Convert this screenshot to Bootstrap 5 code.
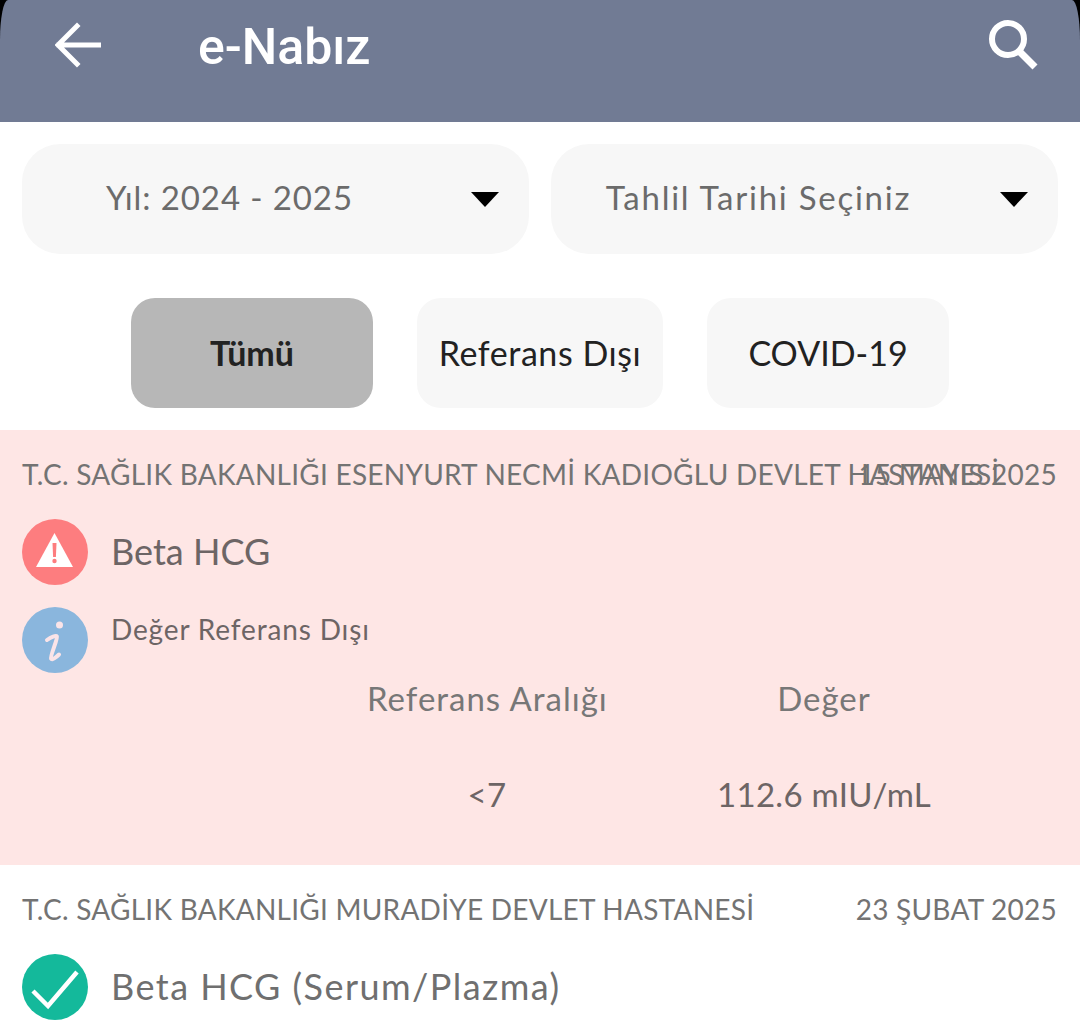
<!DOCTYPE html>
<html lang="tr">
<head>
  <meta charset="UTF-8">
  <title>e-Nabız</title>
  <link href="https://cdn.jsdelivr.net/npm/bootstrap@5.3.2/dist/css/bootstrap.min.css" rel="stylesheet">
  <style>
    html, body { height: 100%; }
    body { background: #fff; font-family: "Lato", "Noto Sans", sans-serif; color: #6f6f6f; overflow: hidden; }
    .screen-top { background: #000; }
    .app-bar { height: 122px; background: #717b94; border-radius: 8px 8px 0 0 / 40px 40px 0 0; padding: 0 42px 32px 55px; color: #fff; }
    .app-title { font-family: "Roboto", sans-serif; font-weight: 500; font-size: 50px; line-height: 1; margin: 4px 0 0 97px; }
    .filter-row { padding: 22px 22px 0; gap: 22px; }
    .year-select { height: 110px; background: #f7f7f7; border-radius: 38px; font-size: 33px; color: #6b6b6b; padding: 0 29px 0 0; flex: 1 1 0; }
    .year-select span { flex: 1; text-align: center; padding-right: 34px; padding-bottom: 2px; letter-spacing: .9px; }
    .year-select span.wide-track { letter-spacing: 1.75px; }
    .caret-down { width: 0; height: 0; border-left: 14px solid transparent; border-right: 14px solid transparent; border-top: 15px solid #000; margin-right: 1px; }
    .tab-row { padding-top: 44px; gap: 44px; }
    .tab-pill { height: 110px; width: 242px; background: #f7f7f7; border-radius: 24px; font-size: 34px; color: #222; padding-bottom: 2px; }
    .tab-pill.tab-wide { width: 246px; letter-spacing: .55px; }
    .tab-pill.tab-on { background: #b7b7b7; font-weight: 700; }
    .result-item { padding: 22px 23px 0 22px; }
    .result-item.result-bad { background: #fee6e5; height: 435px; margin-top: 22px; }
    .hospital-row { position: relative; font-size: 28px; line-height: 44px; letter-spacing: .25px; color: #737373; white-space: nowrap; }
    .hospital-date { position: absolute; right: 0; top: 0; }
    .test-row { gap: 23px; margin-top: 23px; height: 66px; }
    .test-row + .test-row { margin-top: 22px; }
    .test-name { font-size: 36px; color: #6d6565; padding-bottom: 2px; }
    .test-name.wide-track { letter-spacing: 1.45px; color: #6f6f6f; }
    .test-note { font-size: 28px; letter-spacing: .85px; color: #6d6565; position: relative; top: -11px; }
    .round-icon { width: 66px; height: 66px; flex: none; }
    .value-grid { color: #777; font-size: 33px; letter-spacing: 1px; white-space: nowrap; }
    .value-head, .value-data { display: flex; }
    .value-head { margin-top: 1px; }
    .value-data { margin-top: 46px; color: #6d6565; letter-spacing: .3px; }
    .value-ref { width: 240px; margin-left: 345px; text-align: center; }
    .value-num { width: 214px; margin-left: 110px; text-align: center; }
  </style>
</head>
<body>
<div class="screen-top">
  <header class="app-bar d-flex align-items-center">
    <svg width="46" height="46" viewBox="0 0 46 46" fill="none" stroke="#fff" stroke-width="5" stroke-linecap="square"><path d="M44 23H4M22 4L3 23l19 19"/></svg>
    <h1 class="app-title">e-Nabız</h1>
    <svg class="ms-auto" width="50" height="50" viewBox="0 0 50 50" fill="none" stroke="#fff"><circle cx="20" cy="19" r="16" stroke-width="6"/><path d="M31 31l16 16" stroke-width="7"/></svg>
  </header>
</div>

<div class="d-flex filter-row">
  <div class="year-select d-flex align-items-center"><span>Yıl: 2024 - 2025</span><i class="caret-down"></i></div>
  <div class="year-select d-flex align-items-center"><span class="wide-track">Tahlil Tarihi Seçiniz</span><i class="caret-down"></i></div>
</div>

<div class="d-flex justify-content-center tab-row">
  <div class="tab-pill tab-on d-flex align-items-center justify-content-center">Tümü</div>
  <div class="tab-pill tab-wide d-flex align-items-center justify-content-center">Referans Dışı</div>
  <div class="tab-pill d-flex align-items-center justify-content-center">COVID-19</div>
</div>

<section class="result-item result-bad">
  <div class="hospital-row">T.C. SAĞLIK BAKANLIĞI ESENYURT NECMİ KADIOĞLU DEVLET HASTANESİ<span class="hospital-date">15 MAYIS 2025</span></div>
  <div class="test-row d-flex align-items-center">
    <svg class="round-icon" viewBox="0 0 66 66"><circle cx="33" cy="33" r="33" fill="#fd7d7f"/><path d="M32.500 14L51 48H14z" fill="#fff"/><path d="M30.500 24h4l-.6 14h-2.800z" fill="#fd7d7f"/><circle cx="32.500" cy="42" r="2.200" fill="#fd7d7f"/></svg>
    <span class="test-name">Beta HCG</span>
  </div>
  <div class="test-row d-flex align-items-center">
    <svg class="round-icon" viewBox="0 0 66 66"><circle cx="33" cy="33" r="33" fill="#8ab6dd"/><circle cx="37.500" cy="18" r="3.500" fill="#fbe4e8"/><path d="M25 33c4-3 9-5 10-3.500s-7 20-6 22 5-1 8-4" fill="none" stroke="#fbe4e8" stroke-width="4" stroke-linecap="round"/></svg>
    <span class="test-note">Değer Referans Dışı</span>
  </div>
  <div class="value-grid">
    <div class="value-head"><div class="value-ref">Referans Aralığı</div><div class="value-num">Değer</div></div>
    <div class="value-data"><div class="value-ref">&lt;7</div><div class="value-num">112.6 mIU/mL</div></div>
  </div>
</section>

<section class="result-item">
  <div class="hospital-row">T.C. SAĞLIK BAKANLIĞI MURADİYE DEVLET HASTANESİ<span class="hospital-date">23 ŞUBAT 2025</span></div>
  <div class="test-row d-flex align-items-center">
    <svg class="round-icon" viewBox="0 0 66 66"><circle cx="33" cy="33" r="33" fill="#14b99b"/><path d="M11 37l15 15 29-34" fill="none" stroke="#fff" stroke-width="4.500"/></svg>
    <span class="test-name wide-track">Beta HCG (Serum/Plazma)</span>
  </div>
</section>

<script src="https://cdn.jsdelivr.net/npm/bootstrap@5.3.2/dist/js/bootstrap.bundle.min.js"></script>
</body>
</html>
